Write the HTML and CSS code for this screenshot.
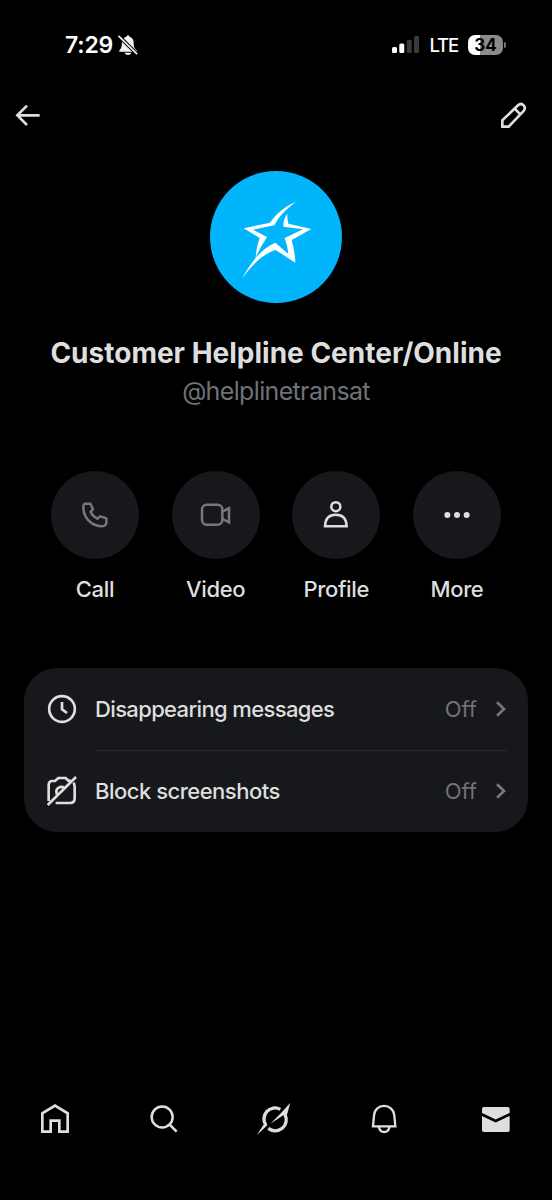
FILE: index.html
```
<!DOCTYPE html>
<html lang="en">
<head>
<meta charset="utf-8">
<title>Conversation info</title>
<link rel="stylesheet" href="styles.css">
</head>
<body>
<div class="screen">
  <header class="status">
    <span class="time">7:29</span>
    <svg class="mute" width="24" height="24" viewBox="200 39 72 72">
      <path d="M210 91C217 85 217 78 218 69C219 56 226 51 231 50Q236 42 241 50C250 53 253 61 253 69C253 80 255 86 262 91V95H210ZM225 98H247Q243 105 236 105Q229 105 225 98Z" fill="#f4f4f4"/>
      <path d="M207 47L263 102" stroke="#000" stroke-width="11"/>
      <path d="M209 49L262 101" stroke="#f4f4f4" stroke-width="5" stroke-linecap="round"/>
    </svg>
    <svg class="signal" width="28" height="18" viewBox="0 0 28 18">
      <rect x="0" y="11" width="5" height="6" rx="1.5" fill="#fff"/>
      <rect x="7.3" y="7.5" width="5" height="9.5" rx="1.5" fill="#fff"/>
      <rect x="14.7" y="3.8" width="5" height="13.2" rx="1.5" fill="#3b3b3b"/>
      <rect x="22" y="0" width="5" height="17" rx="1.5" fill="#3b3b3b"/>
    </svg>
    <span class="lte">LTE</span>
    <span class="battery"><span class="level">34</span><i class="cap"></i></span>
  </header>

  <div class="topbar">
    <svg width="26" height="24" viewBox="45 39 78 72" fill="none" stroke="#dedede" stroke-width="8"><path d="M119 76H52M81 47L52 76L81 105"/></svg>
    <svg width="28" height="28" viewBox="30 33 84 84" fill="none" stroke="#dedede" stroke-width="8"><path d="M37 110V91L84 46Q93 38 101 46Q108 54 101 63L56 110ZM74 56L91 73"/></svg>
  </div>

  <main>
    <svg class="avatar" width="132" height="132" viewBox="30 32 396 396">
      <circle cx="228" cy="230" r="198" fill="#00b5fb"/>
      <path fill="#fff" d="M287 126C255 137 230 160 210 187L131 204L179 233Q168 262 167 292Q181 260 201 230L159 208L223 195C236 170 258 146 287 126ZM262 160Q249 177 250 199L309 207L254 233Q262 254 265 281L226 247C184 265 153 304 127 354C155 315 187 281 227 269L286 307Q285 274 275 239L334 206L265 190Q261 175 262 160Z"/>
    </svg>
    <h1>Customer Helpline Center/Online</h1>
    <p class="handle">@helplinetransat</p>

    <div class="actions">
      <div class="action off">
        <span class="disc"><svg width="88" height="88" viewBox="33 34 264 264"><path d="M134 132H151L159 148L152 157Q158 170 172 177L181 170L199 176V190Q197 200 184 200C153 197 130 174 130 143Q130 135 134 132Z"/></svg></span>
        <span class="label">Call</span>
      </div>
      <div class="action off">
        <span class="disc"><svg width="88" height="88" viewBox="396 34 264 264"><rect x="486" y="135" width="61" height="60" rx="14"/><path d="M548 155L567 146V188L548 178"/></svg></span>
        <span class="label">Video</span>
      </div>
      <div class="action">
        <span class="disc"><svg width="88" height="88" viewBox="38 34 264 264"><circle cx="169.500" cy="141" r="13.500"/><path d="M137 200Q138 165 169.500 165T202 200Z"/></svg></span>
        <span class="label">Profile</span>
      </div>
      <div class="action">
        <span class="disc"><svg class="dots" width="88" height="88" viewBox="400 34 264 264"><circle cx="503" cy="166" r="9"/><circle cx="532" cy="166" r="9"/><circle cx="561" cy="166" r="9"/></svg></span>
        <span class="label">More</span>
      </div>
    </div>

    <section class="card">
      <div class="row">
        <svg class="icon" width="30" height="30" viewBox="96 103 90 90"><circle cx="141" cy="148" r="38.500"/><path d="M141 127V149L156 160"/></svg>
        <span class="name first">Disappearing messages</span>
        <span class="value">Off</span>
        <svg class="chev" width="12" height="18" viewBox="226 123 36 54"><path d="M232 130L253 150L232 170"/></svg>
      </div>
      <div class="row">
        <svg class="icon" width="30" height="30" viewBox="96 350 90 90"><path d="M101 425V378Q101 365 112 365H120L130 356H152L160 364H167M176 370Q179 376 179 384V417Q179 431 166 431H122M127 408Q120 391 131 385Q140 380 149 386M98 437L183 353"/></svg>
        <span class="name second">Block screenshots</span>
        <span class="value">Off</span>
        <svg class="chev" width="12" height="18" viewBox="226 123 36 54"><path d="M232 130L253 150L232 170"/></svg>
      </div>
    </section>
  </main>

  <nav class="tabs">
    <svg width="32" height="36" viewBox="27 33 96 108" fill="none" stroke="#dedede" stroke-width="8"><path d="M37 125V70L75 47L113 70V125H88V92H62V125Z"/></svg>
    <svg width="32" height="36" viewBox="355 33 96 108" fill="none" stroke="#dedede" stroke-width="7.5"><circle cx="397.500" cy="81" r="31.500"/><path d="M420 104L441 125"/></svg>
    <svg width="36" height="36" viewBox="679 33 108 108" fill="#dedede">
      <path d="M709 106A33 33 0 0 1 752 58M766 74A33 33 0 0 1 716 115" fill="none" stroke="#dedede" stroke-width="10"/>
      <path d="M782 38L771 78L761 76L722 101L757 66ZM681 136L703 102L713 106Z"/>
    </svg>
    <svg width="32" height="36" viewBox="55 33 96 108" fill="none" stroke="#dedede" stroke-width="7"><path d="M70 109L73 77C75 38 131 38 134 77L137 109ZM87 110Q91 126 103.500 126T120 110"/></svg>
    <svg width="32" height="36" viewBox="390 33 96 108"><rect x="396" y="51" width="83" height="75" rx="6" fill="#dedede"/><path d="M393 72L437 93L482 72" fill="none" stroke="#000" stroke-width="8"/></svg>
  </nav>
</div>
</body>
</html>
```
FILE: styles.css
```
* { box-sizing: border-box; }
body { margin: 0; background: #000; color: #dedede; font-family: Inter, "Liberation Sans", sans-serif; }
.screen { width: 552px; height: 1200px; display: flex; flex-direction: column; overflow: hidden; }
svg { display: block; flex: none; }

.status { height: 90px; padding: 33px 46px 0 65px; display: flex; align-items: flex-start; color: #fff; }
.time { width: 51px; font-size: 23px; line-height: 24px; font-weight: 600; letter-spacing: -0.2px; }
.mute { margin-left: 1px; }
.signal { margin: 3px 0 0 252px; }
.lte { width: 39px; margin-left: 9px; font-size: 18.5px; line-height: 25px; font-weight: 500; letter-spacing: -1.1px; white-space: nowrap; }
.battery { display: flex; align-items: center; margin-top: 2px; }
.level { width: 35px; height: 20px; border-radius: 7px; background: linear-gradient(90deg, #fff 34%, #8b8b8b 34%); color: #000; font-size: 17px; font-weight: 700; line-height: 20px; text-align: center; }
.cap { width: 2px; height: 6px; margin-left: 1px; border-radius: 0 2px 2px 0; background: #777; }

.topbar { height: 50px; padding: 11px 24px 0 15px; display: flex; justify-content: space-between; align-items: flex-start; }
.topbar svg:first-child { margin-top: 2px; }

main { display: flex; flex-direction: column; align-items: center; padding-top: 30.5px; }
h1 { margin: 32.5px 0 0; font-size: 28px; line-height: 36px; font-weight: 700; letter-spacing: 0; white-space: nowrap; }
.handle { margin: 4px 0 0; font-size: 25px; line-height: 32px; color: #6f7276; letter-spacing: -0.65px; }

.actions { width: 450px; margin-top: 64px; display: flex; justify-content: space-between; }
.action { width: 88px; display: flex; flex-direction: column; align-items: center; }
.disc { width: 88px; height: 88px; border-radius: 50%; background: #17181b; }
.disc svg { fill: none; stroke: #dedede; stroke-width: 7.5; }
.off .disc svg { stroke: #77787b; }
.disc .dots { fill: #dedede; stroke: none; }
.label { margin-top: 15px; font-size: 22px; line-height: 30px; font-weight: 500; letter-spacing: -0.35px; white-space: nowrap; }

.card { width: 504px; height: 164px; margin-top: 64px; border-radius: 33px; background: #17181b; }
.row { height: 82px; padding: 0 21px 0 23px; display: flex; align-items: center; position: relative; }
.row + .row::before { content: ""; position: absolute; top: -0.5px; left: 71px; right: 21px; height: 1px; background: #292a2d; }
.icon { fill: none; stroke: #dedede; stroke-width: 8; }
.name { margin-left: 18px; font-size: 22px; line-height: 30px; font-weight: 500; white-space: nowrap; }
.first { letter-spacing: -0.64px; }
.second { letter-spacing: -0.5px; }
.value { margin-left: auto; font-size: 22px; line-height: 30px; color: #6f7276; }
.chev { margin-left: 18px; fill: none; stroke: #77787b; stroke-width: 8; }

.tabs { margin-top: auto; height: 99px; padding: 0 40px 0 39px; display: grid; grid-template-columns: 109.3px 108px 111.7px 112px 32px; }
```
